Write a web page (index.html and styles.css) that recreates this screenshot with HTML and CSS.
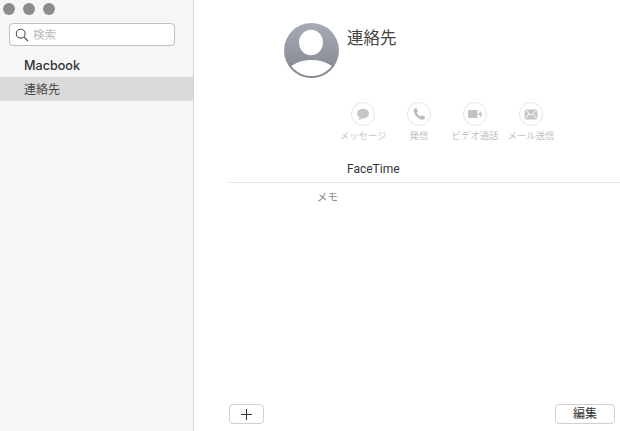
FILE: index.html
```html
<!DOCTYPE html>
<html lang="ja">
<head>
<meta charset="utf-8">
<title>連絡先</title>
<link rel="stylesheet" href="styles.css">
</head>
<body>
<div class="app">
  <aside class="sidebar">
    <div class="lights"><span class="light"></span><span class="light"></span><span class="light"></span></div>
    <div class="search">
      <svg class="search-icon" width="14" height="14" viewBox="0 0 14 14"><circle cx="5.7" cy="5.7" r="4.4" fill="none" stroke="#555" stroke-width="1.1"/><path d="M8.9 8.9L13 13" stroke="#555" stroke-width="1.3" fill="none"/></svg>
      <span class="search-text">検索</span>
    </div>
    <div class="group">Macbook</div>
    <div class="row">連絡先</div>
  </aside>
  <main class="main">
    <div class="hero">
      <svg class="avatar" width="55" height="55" viewBox="0 0 55 55">
        <defs>
          <linearGradient id="av" x1="0" y1="0" x2="0" y2="1"><stop offset="0" stop-color="#a7abb6"/><stop offset="1" stop-color="#82858f"/></linearGradient>
          <clipPath id="avc"><circle cx="27.5" cy="27.5" r="25.6"/></clipPath>
        </defs>
        <circle cx="27.5" cy="27.5" r="27.5" fill="url(#av)"/>
        <ellipse cx="27" cy="19.500" rx="12" ry="12.800" fill="#fff"/>
        <g clip-path="url(#avc)"><ellipse cx="27.500" cy="55" rx="27" ry="18" fill="#fff"/></g>
      </svg>
      <div class="name">連絡先</div>
    </div>
    <div class="actions">
      <div class="action">
        <div class="action-icon"><svg width="14" height="13" viewBox="0 0 14 13"><ellipse cx="7" cy="5.6" rx="6" ry="4.9" fill="#c6c6c6"/><path d="M3.4 8.5L3 12L7 10Z" fill="#c6c6c6"/></svg></div>
        <span class="action-label">メッセージ</span>
      </div>
      <div class="action">
        <div class="action-icon"><svg width="14" height="14" viewBox="0 0 14 14"><path d="M2.2 1.4L4.3 .9L6 4.2L4.8 5.6C5.5 7.4 6.800 8.700 8.500 9.400L9.900 8.100L13 9.800L12.500 11.900C10.800 13.300 8.300 12.800 5.600 10.500C2.500 7.800 .8 3.600 2.200 1.400Z" fill="#bdbdbd"/></svg></div>
        <span class="action-label">発信</span>
      </div>
      <div class="action">
        <div class="action-icon"><svg width="14" height="10" viewBox="0 0 14 10"><rect x="0" y="1" width="9.500" height="8" rx="1" fill="#c2c2c2"/><path d="M10.500 4.500L13.500 1.800V8.200L10.500 5.500Z" fill="#c2c2c2"/></svg></div>
        <span class="action-label">ビデオ通話</span>
      </div>
      <div class="action">
        <div class="action-icon"><svg width="14" height="11" viewBox="0 0 14 11"><rect x=".5" y=".5" width="13" height="10" rx="1" fill="#c6c6c6"/><path d="M1 1L7 6L13 1M1 10L5.300 4.600M13 10L8.700 4.600" fill="none" stroke="#fff" stroke-width="1"/></svg></div>
        <span class="action-label">メール送信</span>
      </div>
    </div>
    <div class="facetime">FaceTime</div>
    <div class="memo"><span class="memo-label">メモ</span></div>
    <div class="footer">
      <button class="btn btn-add"><svg width="11" height="11" viewBox="0 0 11 11"><path d="M5.500 0V11M0 5.500H11" stroke="#333" stroke-width="1" fill="none"/></svg></button>
      <button class="btn btn-edit">編集</button>
    </div>
  </main>
</div>
</body>
</html>
```
FILE: styles.css
```css
* { box-sizing: border-box; }
html, body { margin: 0; height: 100%; }
body {
  background: #fff;
  font-family: "Noto Sans CJK JP", "Noto Sans", sans-serif;
  color: #2a2a2a;
  overflow: hidden;
}
.app { display: flex; width: 620px; height: 431px; }
.sidebar {
  width: 194px;
  flex: none;
  background: #f6f6f6;
  border-right: 1px solid #d2d2d2;
  padding-top: 3px;
}
.lights { display: flex; gap: 8px; padding-left: 3px; height: 12px; }
.light { width: 12px; height: 12px; border-radius: 50%; background: #8c8c8c; }
.search {
  display: flex;
  align-items: center;
  margin: 8px 0 0 9px;
  width: 166px;
  height: 23px;
  background: #fff;
  border: 1px solid #bfbfbf;
  border-radius: 4px;
  padding-left: 5px;
}
.search-icon { flex: none; }
.search-text { margin: -2px 0 0 4px; font-size: 11.5px; line-height: 16px; color: #b9b9b9; }
.group {
  margin: 10px 0 0 24px;
  height: 20px;
  font-family: Inter, sans-serif;
  font-size: 12.6px;
  font-weight: 500;
  line-height: 20px;
  color: #333;
}
.row {
  height: 24px;
  margin-top: 1px;
  padding-left: 24px;
  background: #dadada;
  font-size: 12px;
  line-height: 24px;
  color: #444;
}
.main { flex: 1; display: flex; flex-direction: column; padding: 23px 0 7px 35px; min-width: 0; }
.hero { display: flex; padding-left: 55px; height: 55px; }
.avatar { flex: none; }
.name { margin-left: 8px; font-size: 16.5px; line-height: 28px; color: #444; }
.actions { display: flex; margin-top: 24px; padding-left: 106px; gap: 0; }
.action { width: 56px; display: flex; flex-direction: column; align-items: center; }
.action-icon {
  width: 24px;
  height: 24px;
  border-radius: 50%;
  border: 1px solid #e4e4e4;
  background: #fff;
  display: flex;
  align-items: center;
  justify-content: center;
}
.action-label { margin-top: 2px; font-size: 9.4px; line-height: 14px; color: #c2c2c2; white-space: nowrap; }
.facetime {
  margin-top: 18px;
  height: 23px;
  padding-left: 118px;
  border-bottom: 1px solid #e3e3e3;
  font-family: Roboto, sans-serif;
  font-size: 12px;
  line-height: 18px;
  color: #333;
}
.memo { margin-top: 7px; width: 109px; text-align: right; font-size: 10.6px; line-height: 14px; color: #8a8a8a; }
.footer { margin-top: auto; display: flex; justify-content: space-between; padding-right: 5px; }
.btn {
  height: 20px;
  padding: 0;
  background: #fff;
  border: 1px solid #d0d0d0;
  border-radius: 4px;
  display: flex;
  align-items: center;
  justify-content: center;
  font-family: inherit;
  color: #333;
}
.btn-add { width: 35px; }
.btn-edit { width: 60px; font-size: 12px; line-height: 16px; padding-bottom: 3px; }
```
